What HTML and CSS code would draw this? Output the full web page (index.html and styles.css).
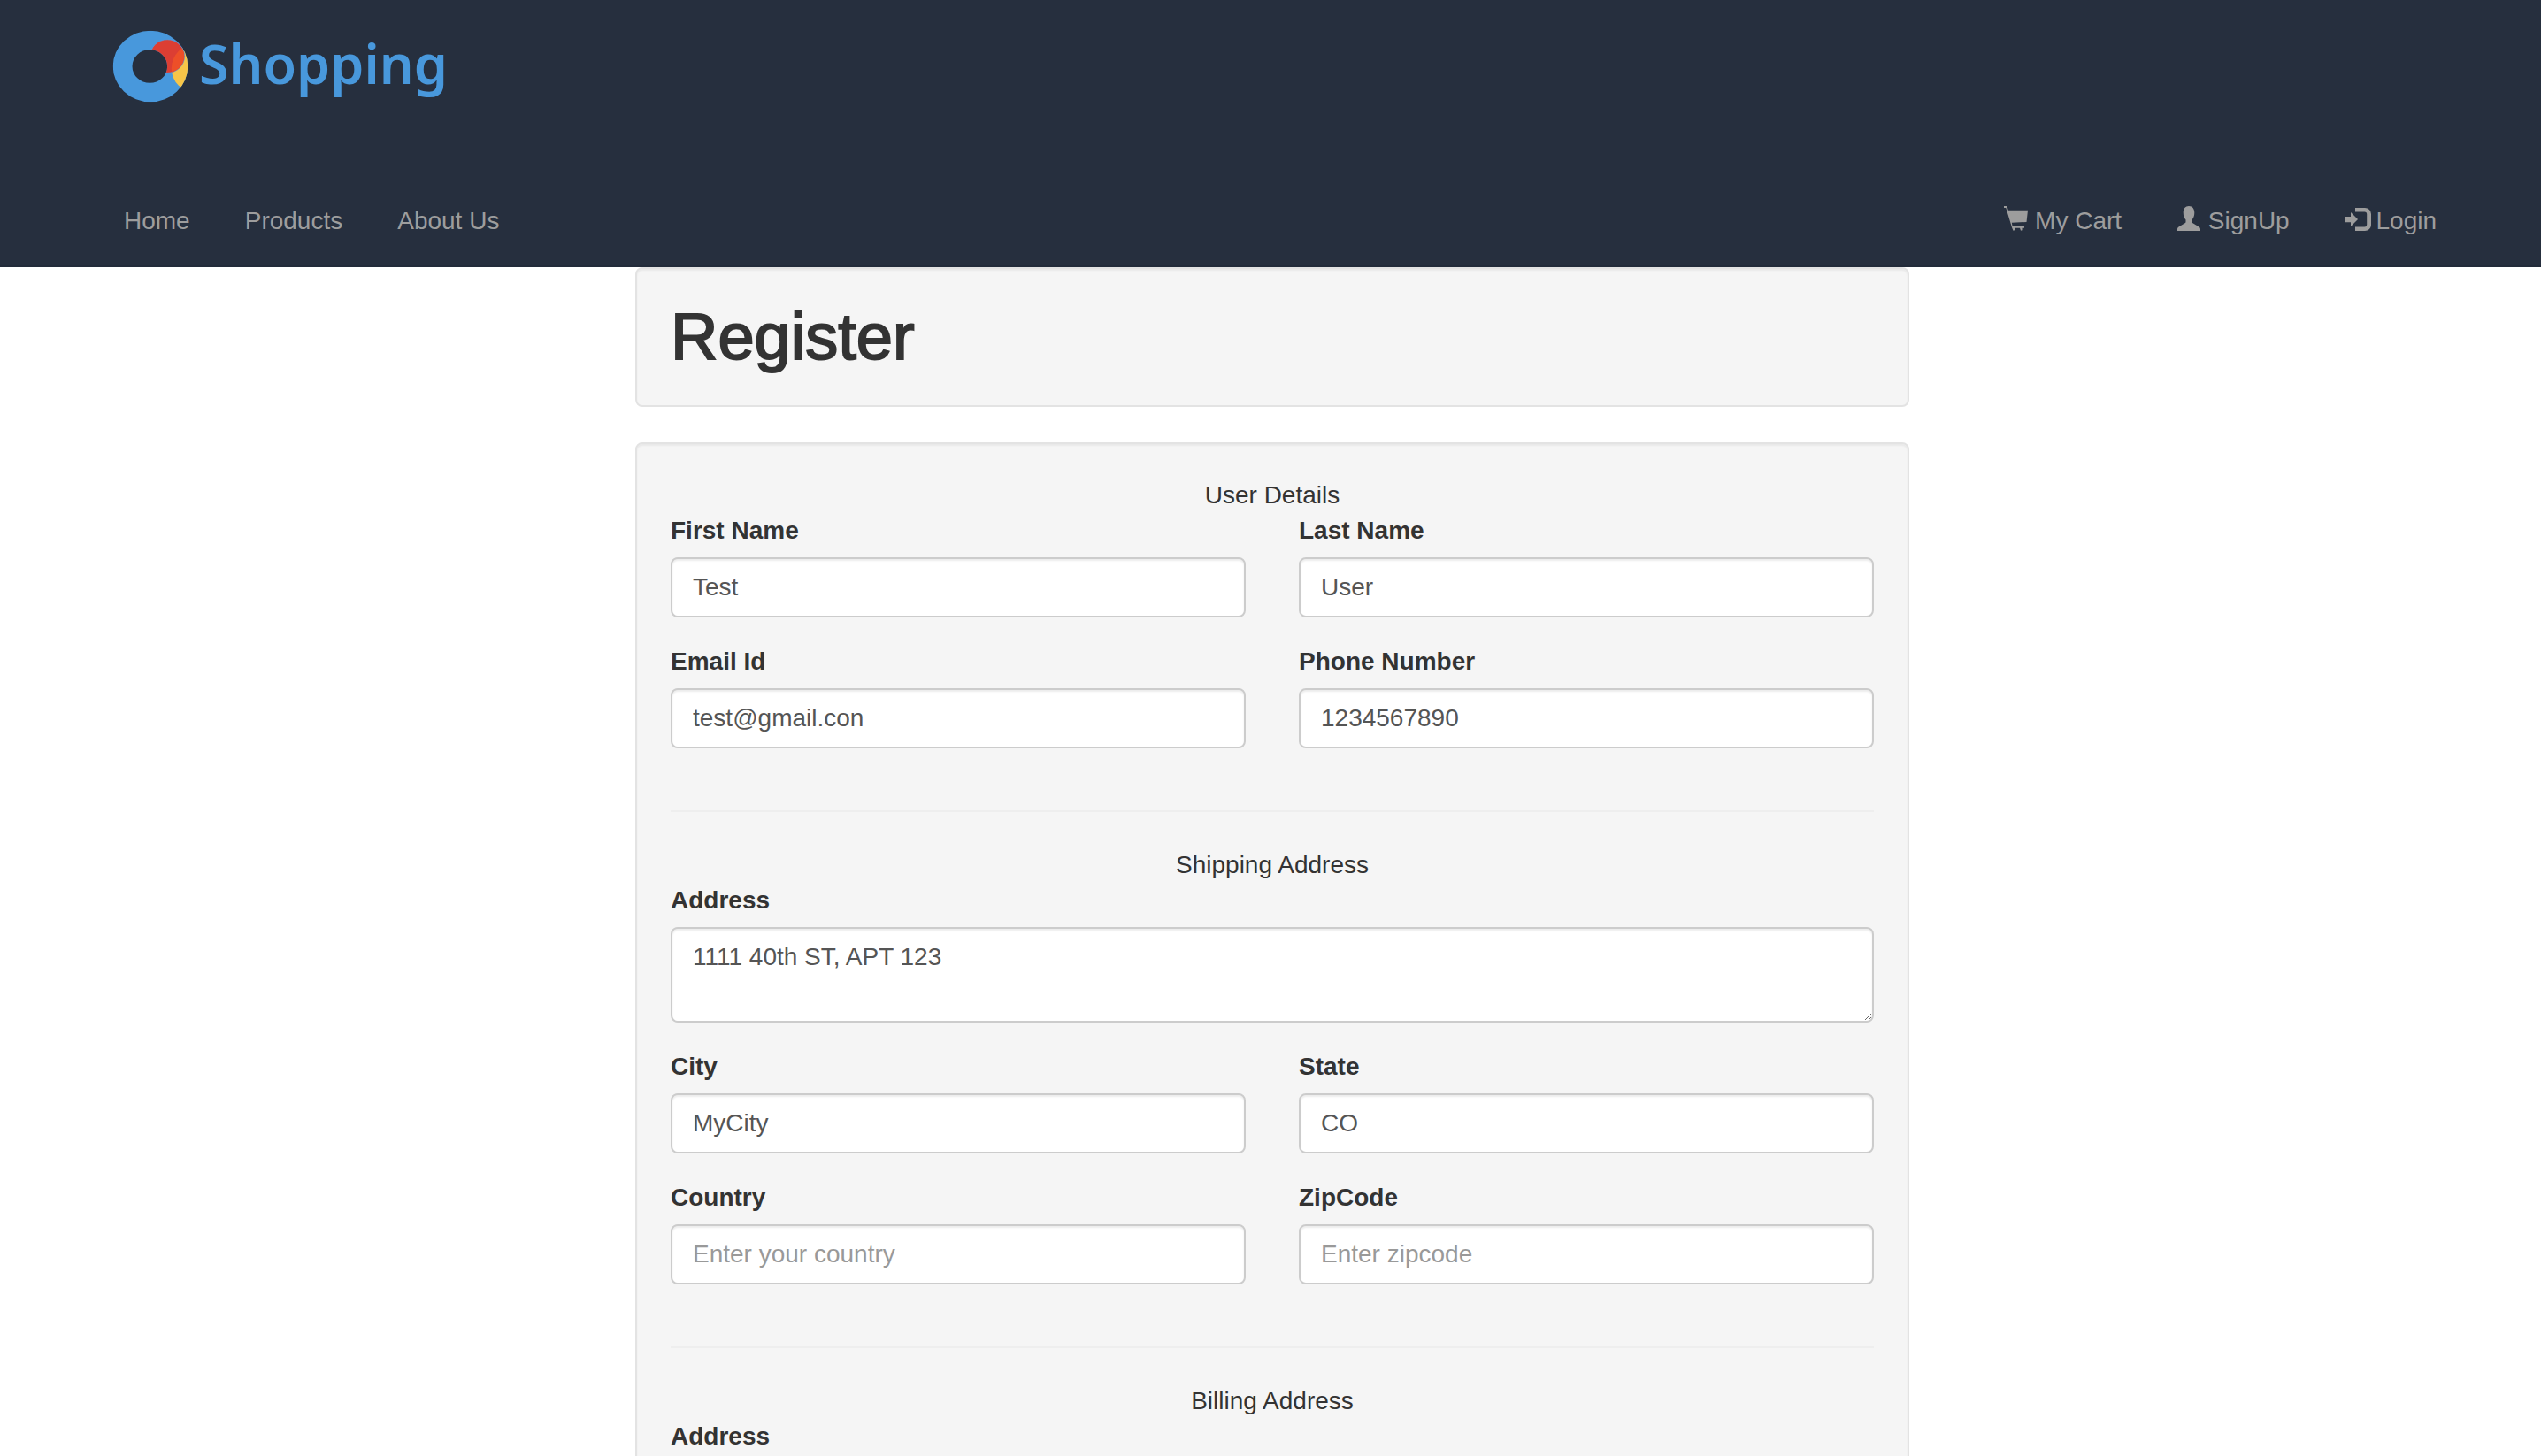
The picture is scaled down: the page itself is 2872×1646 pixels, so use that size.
FILE: index.html
```html
<!DOCTYPE html>
<html lang="en">
<head>
<meta charset="utf-8">
<title>Shopping - Register</title>
<link rel="stylesheet" href="styles.css">
</head>
<body>
<header class="navbar">
  <a class="brand" href="#">
    <svg class="brand-mark" viewBox="82 74 256 244" aria-hidden="true">
      <defs>
        <clipPath id="ring"><path clip-rule="evenodd" d="M84 196a126 120 0 1 0 252 0a126 120 0 1 0-252 0zM149 196a59 56 0 1 0 118 0a59 56 0 1 0-118 0z"/></clipPath>
        <clipPath id="spot"><ellipse cx="267" cy="162" rx="57" ry="55"/></clipPath>
      </defs>
      <g clip-path="url(#ring)">
        <rect x="82" y="74" width="256" height="244" fill="#4898dc"/>
        <ellipse cx="363" cy="203" rx="82" ry="82" fill="#f7c548"/>
        <ellipse cx="267" cy="162" rx="58" ry="56" fill="#dc3e33" stroke="#4aa3ee" stroke-width="2"/>
        <g clip-path="url(#spot)"><ellipse cx="363" cy="203" rx="82" ry="82" fill="#ed4f28"/></g>
      </g>
    </svg>
    <span class="brand-name">Shopping</span>
  </a>
  <nav class="menu">
    <ul class="menu-list">
      <li><a href="#">Home</a></li>
      <li><a href="#">Products</a></li>
      <li><a href="#">About Us</a></li>
    </ul>
    <ul class="menu-list">
      <li><a href="#"><svg class="icon" viewBox="0 0 28 28" aria-hidden="true"><path d="M1 0h3.500l1.400 4.700H28l-1.500 13.300-16.700.7.800 4H24v2h-2.500v2.500l-1.500.500-1-3h-6v2.500l-1.500.500-1.500-3.500L3.300 2H1z"/></svg> My Cart</a></li>
      <li><a href="#"><svg class="icon" viewBox="0 0 28 28" aria-hidden="true"><path d="M14 0c4 0 6.300 3 6.300 7.500 0 3.800-1.200 6.300-2.800 8v2.200c0 .8.300 1.200 1 1.600l6.500 3.900c1.300.8 2 1.700 2 3v1.800H1v-1.800c0-1.300.7-2.200 2-3l6.500-3.900c.7-.4 1-.8 1-1.600v-2.200c-1.600-1.700-2.800-4.200-2.800-8C7.700 3 10 0 14 0z"/></svg> SignUp</a></li>
      <li><a href="#"><svg class="icon" viewBox="0 0 28 28" aria-hidden="true"><path d="M0 12h7V7l8 8-8 8v-4.700H0zM12 2h11a7 7 0 0 1 7 7v12a7 7 0 0 1-7 7H12v-4.500h10.500a2.700 2.700 0 0 0 2.700-2.700V9.200a2.700 2.700 0 0 0-2.700-2.700H12z"/></svg> Login</a></li>
    </ul>
  </nav>
</header>

<main class="page">
  <section class="well">
    <h1>Register</h1>
  </section>

  <form class="well">
    <fieldset class="section">
      <legend>User Details</legend>
      <div class="field"><label for="first-name">First Name</label><input id="first-name" type="text" value="Test"></div>
      <div class="field"><label for="last-name">Last Name</label><input id="last-name" type="text" value="User"></div>
      <div class="field"><label for="email">Email Id</label><input id="email" type="email" value="test@gmail.con"></div>
      <div class="field"><label for="phone">Phone Number</label><input id="phone" type="tel" value="1234567890"></div>
    </fieldset>
    <hr>
    <fieldset class="section">
      <legend>Shipping Address</legend>
      <div class="field wide"><label for="ship-address">Address</label><textarea id="ship-address" rows="2">1111 40th ST, APT 123</textarea></div>
      <div class="field"><label for="ship-city">City</label><input id="ship-city" type="text" value="MyCity"></div>
      <div class="field"><label for="ship-state">State</label><input id="ship-state" type="text" value="CO"></div>
      <div class="field"><label for="ship-country">Country</label><input id="ship-country" type="text" placeholder="Enter your country"></div>
      <div class="field"><label for="ship-zip">ZipCode</label><input id="ship-zip" type="text" placeholder="Enter zipcode"></div>
    </fieldset>
    <hr>
    <fieldset class="section">
      <legend>Billing Address</legend>
      <div class="field wide"><label for="bill-address">Address</label><textarea id="bill-address" rows="2"></textarea></div>
    </fieldset>
  </form>
</main>
</body>
</html>
```
FILE: styles.css
```css
* { box-sizing: border-box; }

body {
  margin: 0;
  background: #fff;
  color: #333;
  font: 28px/40px "Liberation Sans", Arial, sans-serif;
}

/* Header */
.navbar {
  background: #262f3e;
  border-bottom: 2px solid #222b3a;
}

.brand {
  display: flex;
  align-items: flex-start;
  gap: 12px;
  height: 200px;
  padding: 34px 127px 0;
  color: #4898dc;
  text-decoration: none;
}

.brand-mark { width: 86px; height: 82px; }

.brand-name {
  font: 600 61px/76px "Noto Sans", "Open Sans", sans-serif;
}

.menu {
  display: flex;
  justify-content: space-between;
  padding: 0 88px 0 110px;
}

.menu-list {
  display: flex;
  gap: 2px;
  margin: 0;
  padding: 0;
  list-style: none;
}

.menu-list a {
  display: block;
  padding: 30px;
  color: #9d9d9d;
  text-decoration: none;
}

.icon {
  width: 28px;
  height: 28px;
  overflow: visible;
  vertical-align: -2px;
  fill: currentColor;
}

/* Content */
.page {
  width: calc(50% + 4px);
  margin-left: 25%;
}

.well {
  margin: 0 0 40px;
  padding: 38px;
  background: #f5f5f5;
  border: 2px solid #e3e3e3;
  border-radius: 8px;
  box-shadow: inset 0 2px 2px rgba(0, 0, 0, .05);
}

h1 {
  margin: 0;
  font-size: 74px;
  font-weight: 400;
  line-height: 78px;
  -webkit-text-stroke: 2px currentColor;
}

.section {
  display: grid;
  grid-template-columns: 1fr 1fr;
  column-gap: 60px;
  row-gap: 30px;
  min-width: 0;
  margin: 0;
  padding: 0 0 30px;
  border: 0;
}

legend {
  width: 100%;
  padding: 0;
  text-align: center;
}

.field {
  display: flex;
  flex-direction: column;
  gap: 10px;
}

.wide { grid-column: 1 / -1; }

label { font-weight: 700; }

input,
textarea {
  width: 100%;
  margin: 0;
  padding: 12px 23px;
  background: #fff;
  border: 2px solid #ccc;
  border-radius: 8px;
  box-shadow: inset 0 2px 2px rgba(0, 0, 0, .075);
  color: #555;
  font: inherit;
}

input { height: 68px; }

textarea {
  height: 108px;
  resize: vertical;
}

::placeholder {
  color: #999;
  opacity: 1;
}

hr {
  margin: 40px 0;
  border: 0;
  border-top: 2px solid #eee;
}
```
